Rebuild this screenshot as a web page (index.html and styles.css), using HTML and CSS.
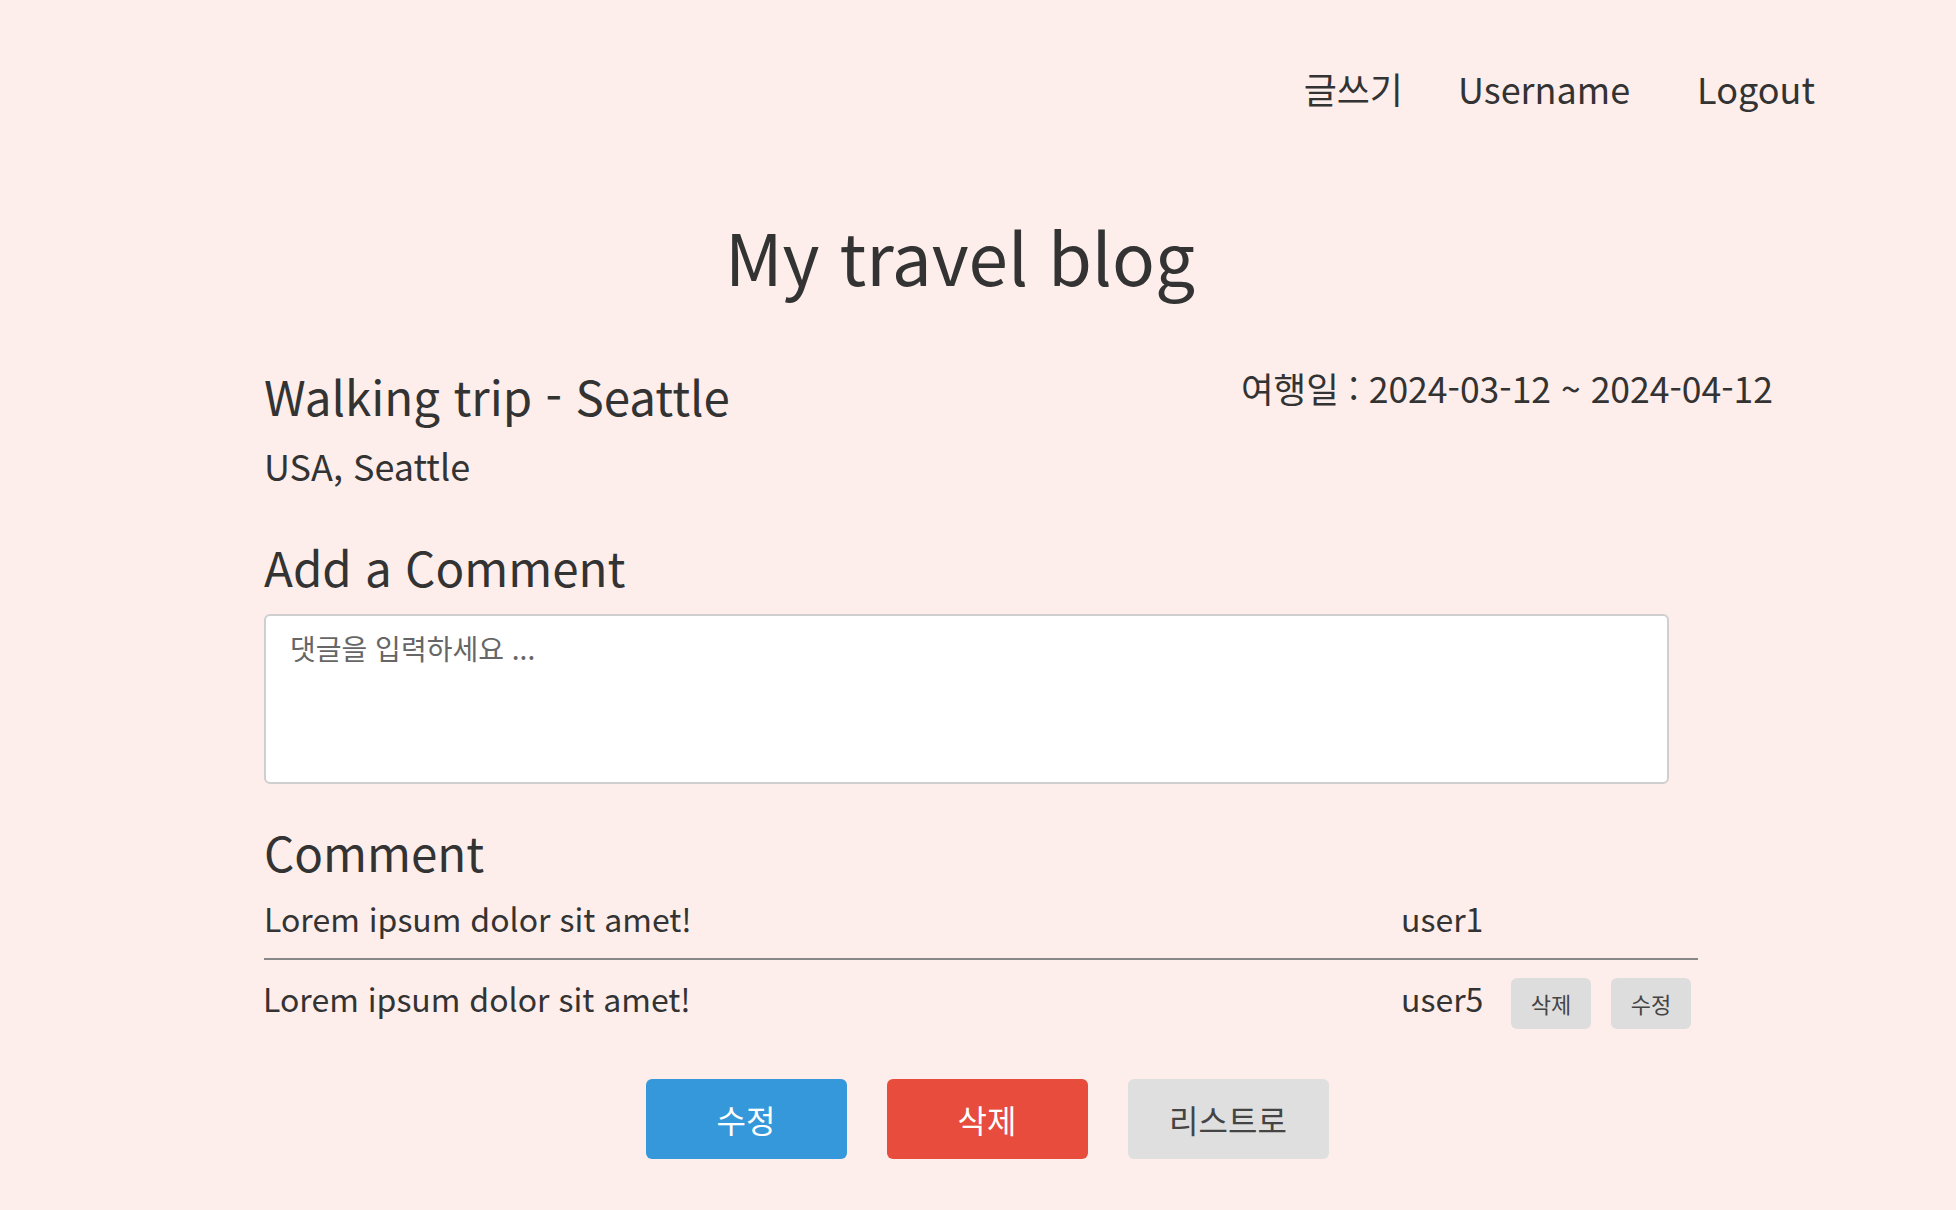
FILE: index.html
```html
<!DOCTYPE html>
<html lang="ko">
<head>
<meta charset="utf-8">
<title>My travel blog</title>
<link rel="stylesheet" href="styles.css">
</head>
<body>
<header class="nav">
  <a class="nav-link" href="#">글쓰기</a>
  <a class="nav-link" href="#">Username</a>
  <a class="nav-link nav-logout" href="#">Logout</a>
</header>
<h1 class="site-title">My travel blog</h1>
<main class="content">
  <section class="post-head">
    <div class="post-info">
      <h2 class="post-title">Walking trip - Seattle</h2>
      <p class="post-place">USA, Seattle</p>
    </div>
    <p class="post-date">여행일 : 2024-03-12 ~ 2024-04-12</p>
  </section>
  <h3 class="section-title add-title">Add a Comment</h3>
  <textarea class="comment-input" placeholder="댓글을 입력하세요 ..."></textarea>
  <h3 class="section-title list-title">Comment</h3>
  <div class="comments">
    <div class="comment-row first">
      <span class="comment-text">Lorem ipsum dolor sit amet!</span>
      <span class="comment-user">user1</span>
    </div>
    <div class="comment-row second">
      <span class="comment-text shift">Lorem ipsum dolor sit amet!</span>
      <span class="comment-user">user5</span>
      <button class="small-btn">삭제</button>
      <button class="small-btn">수정</button>
    </div>
  </div>
  <div class="actions">
    <button class="btn btn-edit">수정</button>
    <button class="btn btn-delete">삭제</button>
    <button class="btn btn-list">리스트로</button>
  </div>
</main>
</body>
</html>
```
FILE: styles.css
```css
* { box-sizing: border-box; }
body {
  margin: 0;
  background: #fdeeeb;
  color: #333;
  font-family: "Noto Sans CJK KR", "Noto Sans", sans-serif;
}
.nav {
  display: flex;
  justify-content: flex-end;
  gap: 55px;
  padding: 67px 141px 0 0;
}
.nav-link {
  color: #333;
  text-decoration: none;
  font-size: 36px;
  line-height: 42px;
}
.nav-logout { margin-left: 12px; }
.site-title {
  margin: 101px 0 0;
  text-align: center;
  font-weight: 400;
  font-size: 71px;
  line-height: 90px;
  padding-right: 36px;
}
.content {
  margin-left: 264px;
  width: 1509px;
}
.post-head {
  display: flex;
  justify-content: space-between;
  align-items: flex-start;
  margin-top: 66px;
}
.post-title {
  margin: 0;
  font-weight: 400;
  font-size: 47.5px;
  line-height: 60px;
}
.post-place {
  margin: 17px 0 0;
  font-size: 36px;
  line-height: 44px;
}
.post-date {
  margin: 0;
  font-size: 35.5px;
  line-height: 44px;
}
.section-title {
  margin: 0;
  font-weight: 400;
  font-size: 47.5px;
  line-height: 60px;
}
.add-title { margin-top: 50px; }
.comment-input {
  display: block;
  margin-top: 17px;
  width: 1405px;
  height: 170px;
  padding: 12px 24px;
  border: 2px solid #cfcfcf;
  border-radius: 6px;
  background: #fff;
  font-family: "Noto Sans CJK KR", sans-serif;
  font-size: 28px;
  resize: none;
}
.comment-input::placeholder { color: #666; }
.list-title { margin-top: 38px; }
.comments {
  width: 1434px;
  margin-top: 14px;
}
.comment-row {
  display: grid;
  grid-template-columns: 1137px auto auto auto;
  align-items: center;
  font-size: 32px;
  line-height: 44px;
}
.comment-row.first {
  padding-bottom: 18px;
  border-bottom: 2px solid #888;
}
.comment-row.second {
  padding-top: 16px;
  grid-template-columns: 1137px 110px 80px 80px;
}
.second .comment-text,
.second .comment-user { margin-bottom: 10px; }
.shift { margin-left: -1px; }
.small-btn {
  width: 80px;
  height: 51px;
  border: none;
  border-radius: 6px;
  background: #dddddd;
  color: #444;
  font-family: "Noto Sans CJK KR", sans-serif;
  font-size: 22px;
}
.small-btn + .small-btn { margin-left: 20px; }
.actions {
  width: 1434px;
  display: flex;
  justify-content: center;
  gap: 40px;
  margin-top: 49px;
  padding-left: 12px;
}
.btn {
  width: 201px;
  height: 80px;
  border: none;
  border-radius: 6px;
  font-family: "Noto Sans CJK KR", sans-serif;
  font-size: 32px;
}
.btn-edit { background: #3498db; color: #fff; }
.btn-delete { background: #e74c3c; color: #fff; }
.btn-list { background: #dfdfdf; color: #444; }
```
